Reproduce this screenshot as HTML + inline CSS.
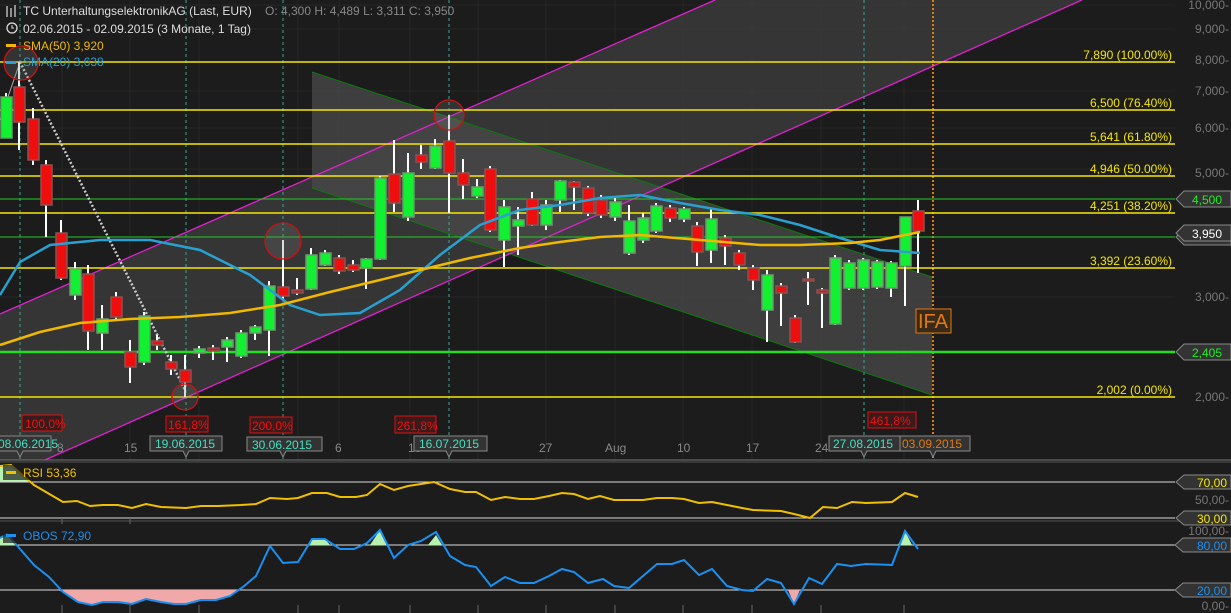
<!DOCTYPE html><html><head><meta charset="utf-8"><style>
html,body{margin:0;padding:0;background:#1c1c1c;}
svg{display:block;font-family:"Liberation Sans",sans-serif;}
</style></head><body>
<svg width="1231" height="613" viewBox="0 0 1231 613" xmlns="http://www.w3.org/2000/svg">
<rect width="1231" height="613" fill="#1c1c1c"/>
<g stroke="#262626" stroke-width="1">
<line x1="0" y1="29" x2="1175" y2="29"/><line x1="0" y1="91" x2="1175" y2="91"/><line x1="0" y1="128" x2="1175" y2="128"/><line x1="0" y1="169" x2="1175" y2="169"/><line x1="0" y1="297" x2="1175" y2="297"/><line x1="0" y1="5" x2="1175" y2="5"/>
<line x1="62" y1="0" x2="62" y2="460"/><line x1="130" y1="0" x2="130" y2="460"/><line x1="199" y1="0" x2="199" y2="460"/><line x1="298" y1="0" x2="298" y2="460"/><line x1="339" y1="0" x2="339" y2="460"/><line x1="410" y1="0" x2="410" y2="460"/><line x1="478" y1="0" x2="478" y2="460"/><line x1="546" y1="0" x2="546" y2="460"/><line x1="615" y1="0" x2="615" y2="460"/><line x1="683" y1="0" x2="683" y2="460"/><line x1="752" y1="0" x2="752" y2="460"/><line x1="821" y1="0" x2="821" y2="460"/><line x1="904" y1="0" x2="904" y2="460"/>
</g>
<polygon points="0,314 715,0 1082,0 45,460 0,460" fill="#3a3a3a" opacity="0.85"/>
<polygon points="312,72 932,277 932,395 312,188" fill="#4a4a4a" opacity="0.75"/>
<line x1="312" y1="72" x2="932" y2="277" stroke="#0a7a0a" stroke-width="1"/>
<line x1="312" y1="188" x2="932" y2="395" stroke="#0a7a0a" stroke-width="1"/>
<line x1="0" y1="314" x2="715" y2="0" stroke="#e020d0" stroke-width="1.3"/>
<line x1="45" y1="460" x2="1082" y2="0" stroke="#e020d0" stroke-width="1.3"/>
<g stroke="#3fa58f" stroke-width="1" stroke-dasharray="3,3">
<line x1="20" y1="0" x2="20" y2="460"/><line x1="186" y1="0" x2="186" y2="460"/><line x1="283" y1="0" x2="283" y2="460"/><line x1="449" y1="0" x2="449" y2="460"/><line x1="864" y1="0" x2="864" y2="460"/>
</g>
<line x1="933" y1="0" x2="933" y2="460" stroke="#e07a10" stroke-width="2" stroke-dasharray="2,2"/>
<g stroke="#f5e600" stroke-width="1.5">
<line x1="0" y1="62" x2="1175" y2="62"/><line x1="0" y1="110" x2="1175" y2="110"/><line x1="0" y1="144" x2="1175" y2="144"/><line x1="0" y1="176" x2="1175" y2="176"/><line x1="0" y1="213" x2="1175" y2="213"/><line x1="0" y1="268" x2="1175" y2="268"/><line x1="0" y1="397" x2="1175" y2="397"/>
</g>
<line x1="0" y1="199" x2="1175" y2="199" stroke="#22cc22" stroke-width="1"/>
<line x1="0" y1="237" x2="1175" y2="237" stroke="#22cc22" stroke-width="1"/>
<line x1="0" y1="352" x2="1175" y2="352" stroke="#22dd22" stroke-width="2.5"/>
<line x1="20" y1="62" x2="185" y2="390" stroke="#cccccc" stroke-width="2.5" stroke-dasharray="2,2"/>
<line x1="0" y1="120" x2="20" y2="62" stroke="#aaa" stroke-width="1"/>
<g stroke="#ffffff" stroke-width="2">
<line x1="6" y1="93" x2="6" y2="138"/><line x1="19" y1="62" x2="19" y2="150"/><line x1="33" y1="108" x2="33" y2="165"/><line x1="46" y1="160" x2="46" y2="237"/><line x1="61" y1="220" x2="61" y2="280"/><line x1="75" y1="262" x2="75" y2="300"/><line x1="88" y1="265" x2="88" y2="350"/><line x1="102" y1="305" x2="102" y2="350"/><line x1="116" y1="292" x2="116" y2="320"/><line x1="130" y1="340" x2="130" y2="383"/><line x1="144" y1="312" x2="144" y2="365"/><line x1="157" y1="335" x2="157" y2="350"/><line x1="171" y1="355" x2="171" y2="375"/><line x1="185" y1="355" x2="185" y2="397"/><line x1="199" y1="346" x2="199" y2="358"/><line x1="213" y1="345" x2="213" y2="360"/><line x1="227" y1="337" x2="227" y2="362"/><line x1="241" y1="330" x2="241" y2="358"/><line x1="255" y1="325" x2="255" y2="340"/><line x1="269" y1="281" x2="269" y2="356"/><line x1="283" y1="240" x2="283" y2="300"/><line x1="297" y1="278" x2="297" y2="295"/><line x1="311" y1="248" x2="311" y2="290"/><line x1="325" y1="250" x2="325" y2="266"/><line x1="339" y1="255" x2="339" y2="274"/><line x1="353" y1="260" x2="353" y2="272"/><line x1="366" y1="258" x2="366" y2="289"/><line x1="380" y1="176" x2="380" y2="260"/><line x1="394" y1="140" x2="394" y2="212"/><line x1="408" y1="153" x2="408" y2="221"/><line x1="421" y1="145" x2="421" y2="169"/><line x1="435" y1="139" x2="435" y2="169"/><line x1="449" y1="115" x2="449" y2="213"/><line x1="463" y1="159" x2="463" y2="199"/><line x1="477" y1="179" x2="477" y2="198"/><line x1="490" y1="166" x2="490" y2="232"/><line x1="504" y1="200" x2="504" y2="267"/><line x1="518" y1="207" x2="518" y2="255"/><line x1="532" y1="192" x2="532" y2="226"/><line x1="546" y1="200" x2="546" y2="230"/><line x1="560" y1="180" x2="560" y2="212"/><line x1="574" y1="181" x2="574" y2="210"/><line x1="588" y1="186" x2="588" y2="216"/><line x1="601" y1="195" x2="601" y2="218"/><line x1="615" y1="198" x2="615" y2="221"/><line x1="629" y1="205" x2="629" y2="255"/><line x1="643" y1="213" x2="643" y2="243"/><line x1="656" y1="203" x2="656" y2="233"/><line x1="670" y1="205" x2="670" y2="222"/><line x1="684" y1="207" x2="684" y2="222"/><line x1="697" y1="222" x2="697" y2="266"/><line x1="711" y1="208" x2="711" y2="263"/><line x1="725" y1="235" x2="725" y2="265"/><line x1="739" y1="250" x2="739" y2="270"/><line x1="753" y1="265" x2="753" y2="290"/><line x1="767" y1="270" x2="767" y2="342"/><line x1="781" y1="283" x2="781" y2="326"/><line x1="795" y1="315" x2="795" y2="343"/><line x1="808" y1="272" x2="808" y2="305"/><line x1="822" y1="288" x2="822" y2="328"/><line x1="835" y1="255" x2="835" y2="325"/><line x1="849" y1="260" x2="849" y2="290"/><line x1="863" y1="258" x2="863" y2="290"/><line x1="877" y1="260" x2="877" y2="289"/><line x1="891" y1="261" x2="891" y2="297"/><line x1="905" y1="266" x2="905" y2="306"/><line x1="918" y1="200" x2="918" y2="273"/>
</g>
<g fill="#11f031" stroke="#6a9a6a" stroke-width="1.5">
<rect x="1" y="97" width="11" height="41"/><rect x="70" y="269" width="11" height="26"/><rect x="97" y="319" width="11" height="14"/><rect x="139" y="316" width="11" height="46"/><rect x="194" y="349" width="11" height="4"/><rect x="222" y="340" width="11" height="7"/><rect x="236" y="333" width="11" height="23"/><rect x="250" y="327" width="11" height="6"/><rect x="264" y="286" width="11" height="44"/><rect x="306" y="255" width="11" height="34"/><rect x="320" y="253" width="11" height="12"/><rect x="361" y="259" width="11" height="9"/><rect x="375" y="178" width="11" height="81"/><rect x="403" y="173" width="11" height="44"/><rect x="430" y="146" width="11" height="22"/><rect x="472" y="187" width="11" height="9"/><rect x="499" y="207" width="11" height="33"/><rect x="513" y="220" width="11" height="6"/><rect x="541" y="205" width="11" height="20"/><rect x="555" y="181" width="11" height="19"/><rect x="610" y="202" width="11" height="15"/><rect x="624" y="221" width="11" height="32"/><rect x="638" y="218" width="11" height="22"/><rect x="651" y="206" width="11" height="25"/><rect x="679" y="209" width="11" height="10"/><rect x="706" y="219" width="11" height="31"/><rect x="762" y="275" width="11" height="35"/><rect x="830" y="258" width="11" height="66"/><rect x="844" y="263" width="11" height="25"/><rect x="858" y="260" width="11" height="28"/><rect x="872" y="262" width="11" height="25"/><rect x="886" y="263" width="11" height="25"/><rect x="900" y="217" width="11" height="49"/>
</g>
<g fill="#ee0e0e" stroke="#8a5050" stroke-width="1.5">
<rect x="14" y="87" width="11" height="35"/><rect x="28" y="119" width="11" height="41"/><rect x="41" y="165" width="11" height="40"/><rect x="56" y="233" width="11" height="45"/><rect x="83" y="274" width="11" height="57"/><rect x="111" y="297" width="11" height="20"/><rect x="125" y="352" width="11" height="15"/><rect x="152" y="341" width="11" height="4"/><rect x="166" y="362" width="11" height="7"/><rect x="180" y="370" width="11" height="12"/><rect x="208" y="348" width="11" height="3"/><rect x="278" y="287" width="11" height="9"/><rect x="292" y="290" width="11" height="3"/><rect x="334" y="258" width="11" height="13"/><rect x="348" y="265" width="11" height="5"/><rect x="389" y="174" width="11" height="29"/><rect x="416" y="155" width="11" height="7"/><rect x="444" y="141" width="11" height="32"/><rect x="458" y="173" width="11" height="12"/><rect x="485" y="169" width="11" height="61"/><rect x="527" y="199" width="11" height="26"/><rect x="569" y="182" width="11" height="5"/><rect x="583" y="188" width="11" height="25"/><rect x="596" y="200" width="11" height="15"/><rect x="665" y="208" width="11" height="10"/><rect x="692" y="226" width="11" height="26"/><rect x="720" y="238" width="11" height="8"/><rect x="734" y="253" width="11" height="12"/><rect x="748" y="268" width="11" height="12"/><rect x="776" y="286" width="11" height="7"/><rect x="790" y="318" width="11" height="24"/><rect x="803" y="279" width="11" height="2"/><rect x="817" y="290" width="11" height="3"/><rect x="913" y="211" width="11" height="20"/>
</g>
<polyline fill="none" stroke="#2aa0d0" stroke-width="2.5" points="0,295 20,262 50,245 100,240 150,240 200,250 250,275 290,305 320,315 360,313 400,290 440,255 480,225 520,210 560,205 600,198 640,195 680,203 720,210 760,215 800,225 840,238 880,250 920,253"/>
<polyline fill="none" stroke="#f0b800" stroke-width="2.5" points="0,345 40,332 80,323 130,319 180,317 230,313 280,305 330,292 380,280 420,270 470,258 520,248 560,242 600,237 640,235 700,240 760,245 800,245 850,243 880,240 920,232"/>
<g fill="rgba(120,120,120,0.25)" stroke="#cc1111" stroke-width="1.3">
<circle cx="21" cy="63" r="17"/><circle cx="185" cy="397" r="13"/><circle cx="283" cy="241" r="18"/><circle cx="449" cy="115" r="15"/>
</g>
<rect x="916" y="309" width="35" height="24" fill="#3a2a1a" stroke="#e07a10" stroke-width="1"/>
<text x="918" y="328" fill="#e07a10" font-size="20">IFA</text>
<g fill="#f5e600" font-size="12" text-anchor="end">
<text x="1172" y="59">7,890 (100.00%)</text><text x="1172" y="107">6,500 (76.40%)</text><text x="1172" y="141">5,641 (61.80%)</text><text x="1172" y="173">4,946 (50.00%)</text><text x="1172" y="210">4,251 (38.20%)</text><text x="1172" y="265">3,392 (23.60%)</text><text x="1172" y="394">2,002 (0.00%)</text>
</g>
<g fill="#777" font-size="12" text-anchor="end">
<text x="1229" y="9">10,000-</text><text x="1229" y="33">9,000-</text><text x="1229" y="64">8,000-</text><text x="1229" y="95">7,000-</text><text x="1229" y="132">6,000-</text><text x="1229" y="177">5,000-</text><text x="1229" y="301">3,000-</text><text x="1229" y="401">2,000-</text>
</g>
<g stroke="#888" stroke-width="1" fill="#333">
<polygon points="1176,237 1184,229 1231,229 1231,245 1184,245"/>
<polygon points="1176,233 1184,225 1231,225 1231,241 1184,241"/>
<polygon points="1176,199 1184,191 1231,191 1231,207 1184,207"/>
<polygon points="1176,352 1184,344 1231,344 1231,360 1184,360"/>
</g>
<text x="1222" y="204" fill="#22ee22" font-size="12" text-anchor="end">4,500</text>
<text x="1222" y="238" fill="#ffffff" font-size="12" text-anchor="end">3,950</text>
<text x="1222" y="357" fill="#22ee22" font-size="12" text-anchor="end">2,405</text>
<g fill="#3a1a1a" stroke="#dd1111" stroke-width="1">
<rect x="22" y="415" width="40" height="16"/><rect x="166" y="416" width="42" height="16"/><rect x="250" y="417" width="42" height="16"/><rect x="395" y="416" width="41" height="17"/><rect x="868" y="412" width="48" height="16"/>
</g>
<g fill="#ee1111" font-size="12">
<text x="25" y="428">100,0%</text><text x="168" y="429">161,8%</text><text x="252" y="430">200,0%</text><text x="397" y="430">261,8%</text><text x="870" y="425">461,8%</text>
</g>
<line x1="0" y1="460" x2="1231" y2="460" stroke="#777" stroke-width="1"/>
<g fill="#888" font-size="12">
<text x="57" y="452">8</text><text x="124" y="452">15</text><text x="335" y="452">6</text><text x="408" y="452">13</text><text x="539" y="452">27</text><text x="605" y="452">Aug</text><text x="677" y="452">10</text><text x="746" y="452">17</text><text x="815" y="452">24</text>
</g>
<g fill="#333" stroke="#888" stroke-width="1">
<path d="M-2,436 H51 V451 H23 L20,457 L17,451 H-2 Z"/>
<path d="M150,436 H222 V451 H189 L186,457 L183,451 H150 Z"/>
<path d="M247,437 H322 V451 H286 L283,457 L280,451 H247 Z"/>
<path d="M414,436 H487 V451 H452 L449,457 L446,451 H414 Z"/>
<path d="M829,436 H900 V451 H867 L864,457 L861,451 H829 Z"/>
<path d="M900,436 H970 V451 H936 L933,457 L930,451 H900 Z"/>
</g>
<g font-size="12" fill="#44e0c0">
<text x="-2" y="448">08.06.2015</text><text x="155" y="448">19.06.2015</text><text x="252" y="449">30.06.2015</text><text x="419" y="448">16.07.2015</text><text x="833" y="448">27.08.2015</text>
</g>
<text x="902" y="448" font-size="12" fill="#e07a10">03.09.2015</text>
<g font-size="12">
<g stroke="#ddd" stroke-width="1.2"><line x1="7" y1="6" x2="7" y2="17"/><line x1="11" y1="8" x2="11" y2="17"/><line x1="15" y1="5" x2="15" y2="17"/></g>
<text x="23" y="15" fill="#ddd">TC UnterhaltungselektronikAG (Last, EUR)</text>
<text x="265" y="15" fill="#888">O: 4,300  H: 4,489  L: 3,311  C: 3,950</text>
<circle cx="12" cy="28" r="5" fill="none" stroke="#ddd" stroke-width="1.3"/><path d="M12,25 V28 H14" stroke="#ddd" fill="none"/>
<text x="23" y="33" fill="#ddd">02.06.2015 - 02.09.2015 (3 Monate, 1 Tag)</text>
<rect x="6" y="44" width="10" height="3" fill="#f0b800"/>
<text x="23" y="50" fill="#f0b800">SMA(50)  3,920</text>
<rect x="6" y="61" width="10" height="3" fill="#2aa0d0"/>
<text x="23" y="66" fill="#2aa0d0">SMA(20)  3,638</text>
</g>
<!-- RSI -->
<line x1="0" y1="462" x2="1231" y2="462" stroke="#555"/>
<line x1="0" y1="482" x2="1175" y2="482" stroke="#ddd" stroke-width="1"/>
<line x1="0" y1="518" x2="1175" y2="518" stroke="#ddd" stroke-width="1"/>
<line x1="0" y1="521" x2="1231" y2="521" stroke="#555"/>
<polygon points="0,482 0,466 11,465 29,482" fill="#b8f0b0"/>
<polyline fill="none" stroke="#f0c000" stroke-width="2" points="0,466 11,465 34,485 63,502 77,501 90,506 103,505 118,505 132,508 146,504 161,507 186,508 201,506 218,506 241,505 256,504 270,498 287,499 298,498 312,493 327,493 340,497 356,497 367,495 380,484 394,490 408,486 434,482 450,489 465,492 476,492 491,500 505,497 520,499 534,499 549,496 562,493 574,494 588,499 600,496 614,500 629,500 643,500 657,498 672,498 684,499 699,503 712,502 727,505 742,508 753,510 781,511 794,514 810,518 823,507 837,508 852,502 866,503 892,502 905,493 918,497"/>
<rect x="3" y="465" width="72" height="15" fill="#1c1c1c" opacity="0.7"/>
<rect x="6" y="471" width="10" height="3" fill="#f0c000"/>
<text x="23" y="477" font-size="12" fill="#f0c000">RSI  53,36</text>
<g stroke="#888" fill="#333"><polygon points="1176,482 1184,475 1231,475 1231,489 1184,489"/><polygon points="1176,518 1184,511 1231,511 1231,525 1184,525"/></g>
<text x="1227" y="487" font-size="12" fill="#f5e600" text-anchor="end">70,00</text>
<text x="1229" y="504" font-size="12" fill="#777" text-anchor="end">50,00-</text>
<text x="1227" y="523" font-size="12" fill="#f5e600" text-anchor="end">30,00</text>
<!-- OBOS -->
<line x1="0" y1="545" x2="1175" y2="545" stroke="#ddd" stroke-width="1"/>
<line x1="0" y1="590" x2="1175" y2="590" stroke="#ddd" stroke-width="1"/>
<g fill="#b8f0b0">
<polygon points="0,545 0,538 7,534 15,545"/><polygon points="310,545 312,539 325,539 330,545"/><polygon points="370,545 380,530 388,545"/><polygon points="428,545 436,535 442,545"/><polygon points="898,545 905,531 912,545"/>
</g>
<g fill="#f0a8a8">
<polygon points="57,590 63,592 78,602 92,605 103,602 118,602 132,604 146,599 161,602 174,604 186,604 201,600 216,600 230,596 240,590"/><polygon points="788,590 794,604 800,590"/>
</g>
<polyline fill="none" stroke="#1a90f0" stroke-width="2" points="0,538 7,534 34,565 49,577 63,592 78,602 92,605 103,602 118,602 132,604 146,599 161,602 174,604 186,604 201,600 216,600 230,596 243,587 256,576 270,546 283,563 298,562 312,539 325,539 340,549 354,549 367,543 380,530 394,558 408,545 421,541 436,532 450,556 465,565 476,567 491,586 505,577 520,583 534,583 549,576 562,569 574,572 588,583 603,579 614,586 629,588 643,576 657,564 672,564 684,560 699,575 712,569 727,586 742,590 753,591 767,579 781,583 794,604 809,578 822,584 837,564 851,566 866,564 892,565 905,531 918,549"/>
<rect x="3" y="528" width="80" height="15" fill="#1c1c1c" opacity="0.7"/>
<rect x="6" y="534" width="10" height="3" fill="#1a90f0"/>
<text x="23" y="540" font-size="12" fill="#1a90f0">OBOS  72,90</text>
<g stroke="#888" fill="#333"><polygon points="1175,545 1183,538 1231,538 1231,552 1183,552"/><polygon points="1175,590 1183,583 1231,583 1231,597 1183,597"/></g>
<text x="1229" y="535" font-size="12" fill="#777" text-anchor="end">100,00-</text>
<text x="1227" y="550" font-size="12" fill="#1a90f0" text-anchor="end">80,00</text>
<text x="1227" y="595" font-size="12" fill="#1a90f0" text-anchor="end">20,00</text>
<text x="1229" y="610" font-size="12" fill="#777" text-anchor="end">0,00-</text>
<g stroke="#666"><line x1="62" y1="518" x2="62" y2="524"/><line x1="130" y1="518" x2="130" y2="524"/><line x1="62" y1="605" x2="62" y2="613"/><line x1="130" y1="605" x2="130" y2="613"/><line x1="199" y1="605" x2="199" y2="613"/><line x1="298" y1="605" x2="298" y2="613"/><line x1="339" y1="605" x2="339" y2="613"/><line x1="410" y1="605" x2="410" y2="613"/><line x1="478" y1="605" x2="478" y2="613"/><line x1="546" y1="605" x2="546" y2="613"/><line x1="615" y1="605" x2="615" y2="613"/><line x1="683" y1="605" x2="683" y2="613"/><line x1="752" y1="605" x2="752" y2="613"/><line x1="821" y1="605" x2="821" y2="613"/><line x1="904" y1="605" x2="904" y2="613"/></g>
</svg>
</body></html>
